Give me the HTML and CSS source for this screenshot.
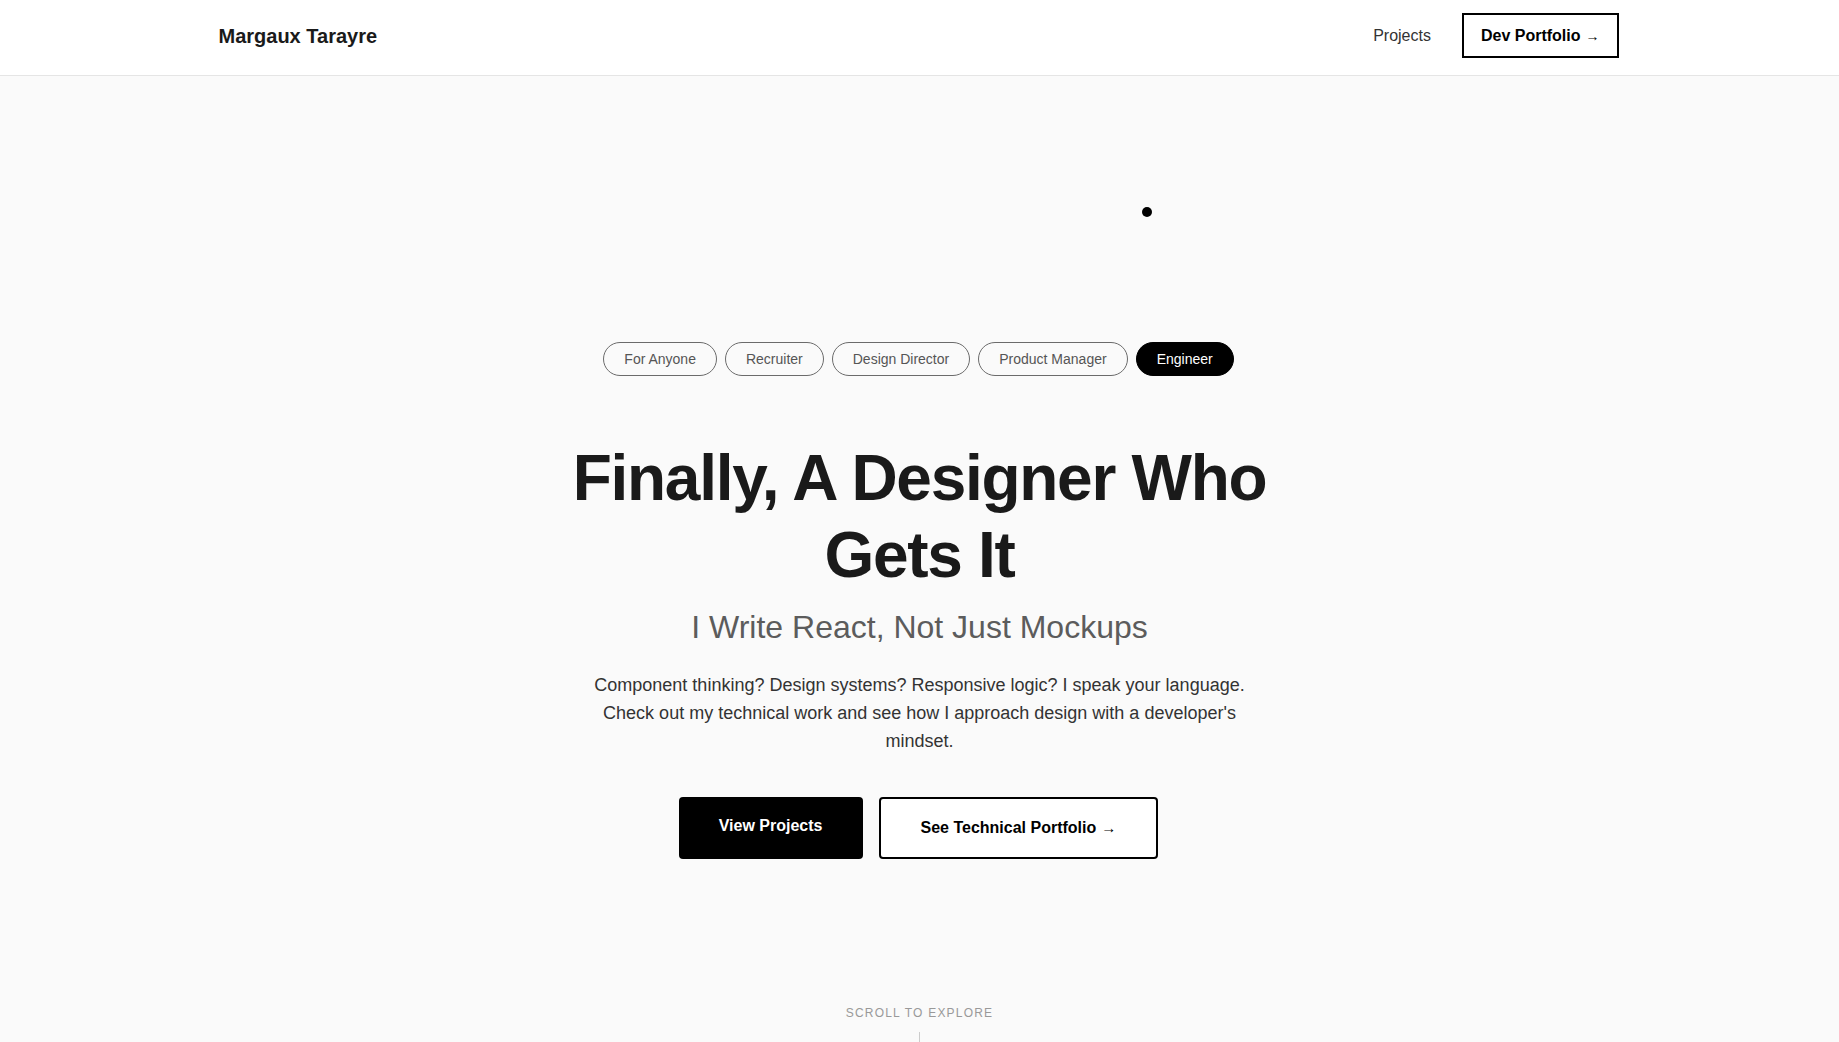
FILE: index.html
```html
<!DOCTYPE html>
<html lang="en">
<head>
<meta charset="utf-8">
<title>Margaux Tarayre</title>
<link rel="stylesheet" href="styles.css">
</head>
<body>
<header class="site-header">
  <div class="container header-inner">
    <a class="logo" href="#">Margaux Tarayre</a>
    <nav class="nav">
      <a class="nav-link" href="#">Projects</a>
      <a class="nav-cta" href="#">Dev Portfolio <span class="arrow">→</span></a>
    </nav>
  </div>
</header>
<main class="hero">
  <div class="cursor-dot"></div>
  <div class="pills">
    <button class="pill">For Anyone</button>
    <button class="pill">Recruiter</button>
    <button class="pill">Design Director</button>
    <button class="pill">Product Manager</button>
    <button class="pill pill-active">Engineer</button>
  </div>
  <h1 class="title">Finally, A Designer Who<br>Gets It</h1>
  <p class="subtitle">I Write React, Not Just Mockups</p>
  <p class="lead">Component thinking? Design systems? Responsive logic? I speak your language. Check out my technical work and see how I approach design with a developer's mindset.</p>
  <div class="actions">
    <a class="btn btn-primary" href="#">View Projects</a>
    <a class="btn btn-outline" href="#">See Technical Portfolio <span class="arrow">→</span></a>
  </div>
  <div class="scroll">
    <span class="scroll-label">SCROLL TO EXPLORE</span>
    <span class="scroll-line"></span>
  </div>
</main>
</body>
</html>
```
FILE: styles.css
```css
* { box-sizing: border-box; }
html, body { margin: 0; padding: 0; }
body {
  font-family: "Liberation Sans", Arial, sans-serif;
  background: #fafafa;
  color: #1a1a1a;
  height: 1042px;
  overflow: hidden;
}
a { text-decoration: none; color: inherit; }

.site-header {
  background: #ffffff;
  border-bottom: 1px solid #e5e5e5;
}
.container {
  max-width: 1402px;
  margin: 0 auto;
}
.header-inner {
  display: flex;
  align-items: center;
  justify-content: space-between;
  padding: 13px 2px 17px 0;
}
.logo {
  font-size: 20px;
  font-weight: 700;
  color: #1a1a1a;
  margin-top: 2px;
}
.nav {
  display: flex;
  align-items: center;
  gap: 31px;
}
.nav-link {
  font-size: 16px;
  color: #333;
}
.nav-cta {
  display: inline-flex;
  align-items: center;
  height: 45px;
  padding: 0 17px;
  border: 2px solid #000;
  font-size: 16px;
  font-weight: 700;
  color: #000;
}
.arrow {
  font-weight: 400;
  font-size: 14px;
  margin-left: 5px;
}

.hero {
  position: relative;
  height: 966px;
  overflow: hidden;
  display: flex;
  flex-direction: column;
  align-items: center;
  padding-top: 266px;
}
.cursor-dot {
  position: absolute;
  left: 1142px;
  top: 131px;
  width: 10px;
  height: 10px;
  border-radius: 50%;
  background: #000;
}
.pills {
  display: flex;
  gap: 8px;
  margin-left: -2px;
}
.pill {
  font-family: "Liberation Sans", Arial, sans-serif;
  font-size: 14px;
  line-height: 16px;
  padding: 8px 20px;
  border: 1px solid #6b6b6b;
  border-radius: 999px;
  background: transparent;
  color: #555;
  cursor: pointer;
}
.pill-active {
  background: #000;
  border-color: #000;
  color: #fff;
}
.title {
  margin: 64px 0 0;
  font-size: 64px;
  line-height: 1.2;
  font-weight: 700;
  letter-spacing: -0.02em;
  text-align: center;
  color: #1a1a1a;
}
.subtitle {
  margin: 14px 0 0;
  font-size: 32px;
  line-height: 1.2;
  color: #5c5c5c;
  text-align: center;
}
.lead {
  margin: 25px 0 0;
  max-width: 660px;
  font-size: 18px;
  line-height: 28px;
  color: #333;
  text-align: center;
}
.actions {
  display: flex;
  gap: 16px;
  margin-top: 42px;
  margin-left: -2px;
}
.btn {
  display: inline-flex;
  align-items: center;
  justify-content: center;
  height: 62px;
  padding: 0 40px;
  border-radius: 4px;
  font-size: 16px;
  font-weight: 700;
}
.btn-primary {
  background: #000;
  color: #fff;
  padding-bottom: 3px;
}
.btn-outline {
  background: #fff;
  color: #000;
  border: 2px solid #000;
  padding: 0 40px;
}
.btn-outline .arrow {
  font-size: 15px;
}
.scroll {
  display: flex;
  flex-direction: column;
  align-items: center;
  margin-top: 145px;
  gap: 10px;
}
.scroll-label {
  font-size: 12px;
  line-height: 18px;
  letter-spacing: 0.1em;
  color: #999;
}
.scroll-line {
  width: 1px;
  height: 60px;
  background: #ccc;
}
```
